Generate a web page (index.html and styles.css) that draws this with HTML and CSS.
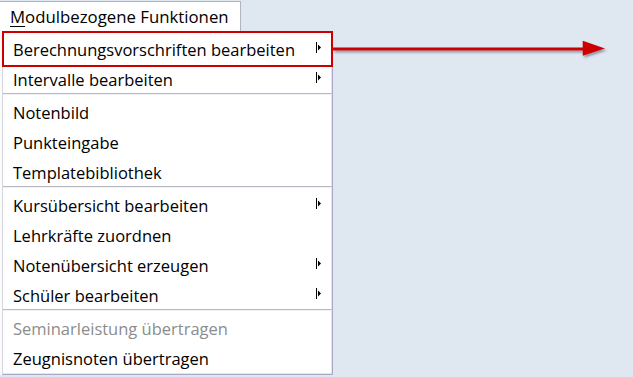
FILE: index.html
```html
<!DOCTYPE html>
<html lang="de">
<head>
<meta charset="utf-8">
<title>Modulbezogene Funktionen</title>
<link rel="stylesheet" href="styles.css">
</head>
<body>
<div class="screen">
  <div class="menubar">
    <div class="menubar-item"><span class="accel">M</span>odulbezogene Funktionen</div>
  </div>
  <div class="dropdown">
    <div class="item highlighted">Berechnungsvorschriften bearbeiten<svg class="subarrow" viewBox="0 0 6 12" width="6" height="12"><line x1="0.5" y1="0" x2="0.5" y2="11" stroke="#000" stroke-width="1"/><polygon points="2,2.5 2,8.5 5,5.5" fill="#000"/></svg></div>
    <div class="item">Intervalle bearbeiten<svg class="subarrow" viewBox="0 0 6 12" width="6" height="12"><line x1="0.5" y1="0" x2="0.5" y2="11" stroke="#000" stroke-width="1"/><polygon points="2,2.5 2,8.5 5,5.5" fill="#000"/></svg></div>
    <div class="sep"></div>
    <div class="item">Notenbild</div>
    <div class="item">Punkteingabe</div>
    <div class="item">Templatebibliothek</div>
    <div class="sep"></div>
    <div class="item">Kursübersicht bearbeiten<svg class="subarrow" viewBox="0 0 6 12" width="6" height="12"><line x1="0.5" y1="0" x2="0.5" y2="11" stroke="#000" stroke-width="1"/><polygon points="2,2.5 2,8.5 5,5.5" fill="#000"/></svg></div>
    <div class="item">Lehrkräfte zuordnen</div>
    <div class="item">Notenübersicht erzeugen<svg class="subarrow" viewBox="0 0 6 12" width="6" height="12"><line x1="0.5" y1="0" x2="0.5" y2="11" stroke="#000" stroke-width="1"/><polygon points="2,2.5 2,8.5 5,5.5" fill="#000"/></svg></div>
    <div class="item">Schüler bearbeiten<svg class="subarrow" viewBox="0 0 6 12" width="6" height="12"><line x1="0.5" y1="0" x2="0.5" y2="11" stroke="#000" stroke-width="1"/><polygon points="2,2.5 2,8.5 5,5.5" fill="#000"/></svg></div>
    <div class="sep"></div>
    <div class="item disabled">Seminarleistung übertragen</div>
    <div class="item">Zeugnisnoten übertragen</div>
  </div>
  <svg class="callout" width="290" height="26" viewBox="0 0 290 26">
    <defs>
      <filter id="shadow" x="-5%" y="-50%" width="110%" height="200%">
        <feDropShadow dx="1.5" dy="2" stdDeviation="1" flood-color="#505060" flood-opacity="0.55"/>
      </filter>
    </defs>
    <g filter="url(#shadow)" fill="#cc0000">
      <rect x="0" y="11.5" width="252" height="3"/>
      <polygon points="249.7,4.7 272,12.6 249.7,19.7"/>
    </g>
  </svg>
</div>
</body>
</html>
```
FILE: styles.css
```css
html, body {
  margin: 0;
  padding: 0;
}
body {
  background: #dfe8f1;
  font-family: "Open Sans", "Noto Sans", "DejaVu Sans", sans-serif;
  color: #000;
  width: 633px;
  height: 377px;
  overflow: hidden;
}
.screen {
  position: relative;
  height: 377px;
}
.menubar {
  height: 31px;
  display: flex;
}
.menubar-item {
  box-sizing: border-box;
  width: 241px;
  height: 30px;
  margin-top: 1px;
  background: #fff;
  border-top: 1px solid #b4b4bc;
  border-right: 1px solid #b4b4bc;
  padding-left: 10px;
  padding-top: 1px;
  font-size: 16.8px;
  line-height: 28px;
  white-space: nowrap;
}
.accel {
  text-decoration: underline;
  text-underline-offset: 3px;
}
.dropdown {
  box-sizing: border-box;
  margin-left: 2px;
  width: 331px;
  background: #fff;
  border-left: 1px solid #d6d6de;
  border-right: 1px solid #a9a9c6;
  border-bottom: 1px solid #a9a9c6;
  padding: 2px 0 2px 0;
  box-shadow: inset -1px -1px 0 #e4e4ec, -2px 0 0 #fbfbfb;
}
.item {
  position: relative;
  box-sizing: border-box;
  height: 30px;
  padding-left: 10px;
  padding-top: 3px;
  display: flex;
  align-items: center;
  font-size: 16.5px;
  white-space: nowrap;
}
.item.disabled {
  color: #8c8c8c;
}
.item.highlighted::after {
  content: "";
  position: absolute;
  left: -1px;
  right: -1px;
  top: -2px;
  bottom: -4px;
  border: 2px solid #cc0000;
  pointer-events: none;
}
.subarrow {
  position: absolute;
  left: 313px;
  top: 9px;
}
.sep {
  height: 0;
  border-top: 1px solid #b9b9c6;
  border-bottom: 1px solid #f0f0f7;
  margin-bottom: 1px;
}
.callout {
  position: absolute;
  left: 333px;
  top: 36px;
}
```
